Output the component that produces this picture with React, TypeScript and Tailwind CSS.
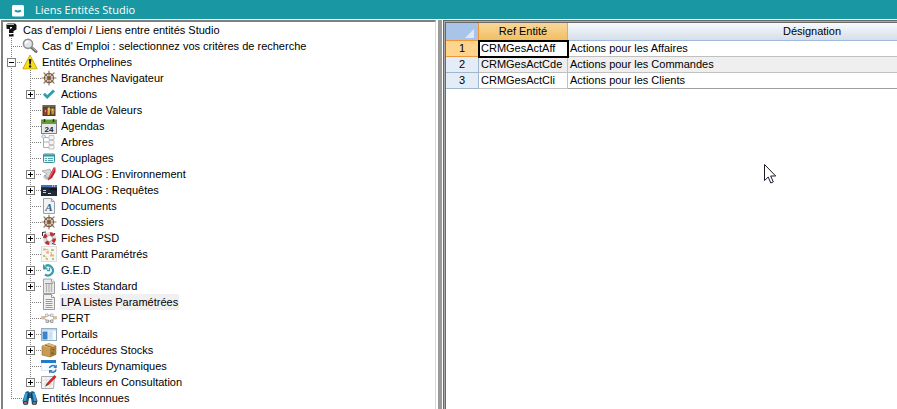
import { useState } from 'react';
import type { ReactNode } from 'react';

interface TreeItem {
  label: string;
  icon: ReactNode;
  expandable?: boolean;
  selected?: boolean;
}

interface EntityRow {
  ref: string;
  designation: string;
}

function Icon({ children }: { children: ReactNode }) {
  return (
    <svg viewBox="0 0 16 16" className="block size-4 shrink-0" aria-hidden="true">
      {children}
    </svg>
  );
}

const helpIcon = (
  <Icon>
    <path d="M3 3l1.500-1.500H12L13.500 3v4.500L10.500 9v2H6V7.500L9 6V5H7v2H4z" fill="#111" />
    <path d="M3.500 2.500h7.500" stroke="#b5b5b5" strokeWidth="1" />
    <path d="M3.500 3v3.500" stroke="#888" strokeWidth=".8" />
    <path d="M6 12h4.500v2.500H6z" fill="#111" />
    <path d="M6.500 12.500h2" stroke="#999" strokeWidth=".8" />
  </Icon>
);

const searchIcon = (
  <Icon>
    <path d="M9.500 9.500l4.500 4" stroke="#6a6a6a" strokeWidth="3" strokeLinecap="round" />
    <path d="M10 9.500l4 3.500" stroke="#b9b9b9" strokeWidth="1" strokeLinecap="round" />
    <circle cx="6" cy="5.800" r="4.600" fill="#dfe5e8" stroke="#8f8f8f" strokeWidth="1.500" />
    <path d="M3.500 6a2.800 2.800 0 0 1 3-2.500" stroke="#fff" strokeWidth="1.300" fill="none" />
  </Icon>
);

const warningIcon = (
  <Icon>
    <path d="M8 1L15.200 14.800H.8z" fill="#f6df18" stroke="#c9a800" strokeWidth=".9" strokeLinejoin="round" />
    <path d="M6.800 5h2.600L8.800 10.500H7.400z" fill="#151515" />
    <circle cx="8.100" cy="12.400" r="1.200" fill="#151515" />
  </Icon>
);

const wheelIcon = (
  <Icon>
    <path
      d="M8 1v14M1 8h14M3 3l10 10M13 3L3 13"
      stroke="#957658"
      strokeWidth="1.200"
      strokeLinecap="round"
    />
    <circle cx="8" cy="8" r="4.500" fill="none" stroke="#7d6045" strokeWidth="1.300" />
    <circle cx="8" cy="8" r="1.600" fill="#5d4128" />
    <circle cx="8" cy="8" r=".6" fill="#d9bb91" />
  </Icon>
);

const checkIcon = (
  <Icon>
    <path d="M3 7.800l3.200 3.200L13 4.500" stroke="#2a9fae" strokeWidth="2.800" fill="none" />
  </Icon>
);

const valuesIcon = (
  <Icon>
    <rect x="1.500" y="3" width="13" height="11" fill="#4b3e2e" />
    <path d="M2 4h12" stroke="#9a8b6c" />
    <path d="M3 7l2-1 1 3-1 4H3z" fill="#a13a26" />
    <path d="M6.500 6l2-1 1 2-1 6h-2z" fill="#e0b34b" />
    <path d="M10 7l2-1.500 1.500 2-.5 5h-2.500z" fill="#c78e2e" />
    <path d="M7 7h1M11 8h1M4 9h1" stroke="#fff1b5" />
  </Icon>
);

const agendaIcon = (
  <Icon>
    <rect x=".5" y="2" width="15" height="13.500" fill="#e8e8e8" stroke="#666" strokeWidth=".8" />
    <rect x="1" y="2" width="14" height="4" fill="#5f9e35" />
    <path d="M3.500 1v3M12.500 1v3" stroke="#333" strokeWidth="1.500" />
    <text x="8" y="13.500" textAnchor="middle" fontSize="8" fontWeight="700" fontFamily="Liberation Sans, sans-serif" fill="#222">
      24
    </text>
  </Icon>
);

const branchIcon = (
  <Icon>
    <path d="M2.500 3.500v10H8M2.500 8H8M2.500 3.500H8" stroke="#a9b0b5" fill="none" />
    <path d="M8 1.500h5v4H8zM8 6.500h5v4H8zM8 11.500h5v3.500H8z" fill="#f4f4f4" stroke="#c4c4c4" />
    <circle cx="2.500" cy="2.500" r="1.800" fill="#dceaf1" stroke="#9cb5c2" strokeWidth=".8" />
  </Icon>
);

const couplingIcon = (
  <Icon>
    <rect x="2.500" y="4" width="11" height="8.500" rx=".8" fill="#e6f3f4" stroke="#398f9a" />
    <path d="M2.500 4.500h11v2h-11z" fill="#2798a5" />
    <path d="M4 8.500h2M7 8.500h5M4 10.500h2M7 10.500h5" stroke="#56a5ad" />
  </Icon>
);

const dialogIcon = (
  <Icon>
    <path d="M1 5l8-2 2 6-3 4c-3 1-6-1-5-3l3-2z" fill="#d7d7d9" stroke="#a0a0a4" strokeWidth=".7" />
    <path d="M12.500 1.500h2V6L11 12l-4 2.500.5-3z" fill="#c5202d" />
    <path d="M13.500 2L8.500 11.500" stroke="#e9808a" strokeWidth=".9" />
    <path d="M3.500 9l4 4" stroke="#777" strokeWidth=".8" />
  </Icon>
);

const queryIcon = (
  <Icon>
    <rect y="3" width="16" height="11" fill="#10151f" />
    <rect y="3" width="16" height="2.500" fill="#4b70bc" />
    <path d="M0 5.500h7l3 3h6V14H0z" fill="#222a38" />
    <path d="M2 8.500h3M2 10.500h3M7 11.500h3" stroke="#e1e5ec" strokeWidth=".9" />
    <path d="M11 4h1M13 4h1" stroke="#fff" />
  </Icon>
);

const documentIcon = (
  <Icon>
    <path d="M2.500.5h8l3 3v12h-11z" fill="#f1f3f4" stroke="#9ba3a9" />
    <path d="M10.500.5v3h3" fill="#d5dadd" stroke="#9ba3a9" />
    <text x="8" y="12.500" textAnchor="middle" fontSize="11" fontStyle="italic" fontWeight="700" fontFamily="Liberation Serif, serif" fill="#3d5f82">
      A
    </text>
  </Icon>
);

const psdIcon = (
  <Icon>
    <ellipse cx="8.500" cy="8.500" rx="4.800" ry="4.800" fill="none" stroke="#dedede" strokeWidth="3.600" />
    <ellipse cx="8.500" cy="8.500" rx="4.800" ry="4.800" fill="none" stroke="#c12f35" strokeWidth="3.600" strokeDasharray="3.800 3.740" />
    <ellipse cx="8.500" cy="8.500" rx="3" ry="3" fill="#fff" stroke="#777" strokeWidth=".6" />
    <path d="M1 2.500l4-.5M1.500 2v4M11 13.500l3.500 1M14 3l-1.500 2" stroke="#333" />
  </Icon>
);

const ganttIcon = (
  <Icon>
    <rect x=".5" y=".5" width="15" height="15" fill="#f7f6f2" stroke="#dedede" />
    <path d="M2 3.500h3M5 6.500h3M9 9.500h4M5 13h2" stroke="#eab675" strokeWidth="2" />
    <path d="M10 4h3M2 10h2M11 13h2" stroke="#a4cf7b" strokeWidth="2" />
    <path d="M5 3.500h2v3M9 6.500h1.500v3M5 10v3" stroke="#c9a092" strokeWidth=".6" fill="none" />
  </Icon>
);

const gedIcon = (
  <Icon>
    <path d="M4.500 4A5 5 0 1 1 4 12.500" stroke="#3a9fac" strokeWidth="2.200" fill="none" />
    <path d="M2 2v5.500h5.500z" fill="#3a9fac" />
    <path d="M8.500 5.500v3.200H6" stroke="#3a9fac" strokeWidth="1.300" fill="none" />
  </Icon>
);

const listIcon = (
  <Icon>
    <path d="M2.500 1h8l3 3v11.500h-11z" fill="#e9e9e9" stroke="#a0a0a0" />
    <path d="M10.500 1v3h3" fill="#fff" stroke="#a0a0a0" />
    <path d="M4 5.500h8" stroke="#999" />
    <path d="M5.500 6v8M8 6v8M10.500 6v8" stroke="#b5b5b5" strokeWidth="1.300" />
  </Icon>
);

const linesIcon = (
  <Icon>
    <path d="M2.500.5h8l3 3v12h-11z" fill="#f2f2f2" stroke="#999" />
    <path d="M10.500.5v3h3" fill="#fff" stroke="#999" />
    <path d="M4.500 5.500h7M4.500 7.500h7M4.500 9.500h7M4.500 11.500h7M4.500 13.500h7" stroke="#999" />
  </Icon>
);

const pertIcon = (
  <Icon>
    <path d="M3 8l3-2.500h4.500l3 2.500-3 3H6z" fill="none" stroke="#aaa" />
    <path d="M.5 6.500h3.500v2.500H.5zM12.500 6.500h3v2.500h-3z" fill="#e6c096" stroke="#c3a88d" strokeWidth=".6" />
    <path d="M4.500 4h2.500v2.500H4.500zM9.500 4H12v2.500H9.500z" fill="#ececec" stroke="#aaa" strokeWidth=".7" />
    <path d="M5 10h2.500v2.500H5zM9.500 10H12v2.500H9.500z" fill="#ddd" stroke="#888" strokeWidth=".7" />
  </Icon>
);

const portalIcon = (
  <Icon>
    <rect x=".5" y="2.500" width="15" height="12" fill="#edf5fb" stroke="#91aec8" />
    <path d="M1 3h14v1.500H1z" fill="#b9d5ed" />
    <path d="M1.500 5.500h5v8h-5z" fill="#3d83c9" />
    <path d="M7.500 5.500h4v8h-4z" fill="#c8e1f4" />
    <path d="M12.500 5.500h2v8h-2z" fill="#fff" />
  </Icon>
);

const boxIcon = (
  <Icon>
    <path d="M1 4l7-2.500L15 4v8.500l-6 2.500-8-2z" fill="#c79b52" stroke="#93692e" strokeWidth=".6" />
    <path d="M1 4l8 2 6-2-7-2.500z" fill="#dfb96e" />
    <path d="M9 6l6-2v8.500L9 15z" fill="#a97c3a" />
    <path d="M4 3.200l7 2M11 8l2-.6M11 10v2l2-.5" stroke="#705029" strokeWidth=".8" fill="none" />
  </Icon>
);

const refreshIcon = (
  <Icon>
    <path d="M.5 2.500h14v10H.5z" fill="#fafcff" stroke="#dbe7f1" />
    <path d="M0 2h15v3H0z" fill="#247cc9" />
    <path d="M8.500 10a3.500 3 0 0 1 6-1.500M15 11.500a3.500 3 0 0 1-6 1.800" stroke="#2c82c8" strokeWidth="1.600" fill="none" />
    <path d="M15.800 6.500v3.500h-3.500zM8 15.500V12h3.500z" fill="#2c82c8" />
  </Icon>
);

const editIcon = (
  <Icon>
    <path d="M.5 2.500h13l-1 12H.5z" fill="#f5f5f5" stroke="#aaa" />
    <path d="M1 6h11M1 10h11M5 3v11M9 3v11" stroke="#dadada" strokeWidth=".8" />
    <path d="M13.500 1l2 2-8 8-2.500 1 1-3z" fill="#cf2a32" />
    <path d="M6 9.500L3.500 13l3.500-2.300z" fill="#444" />
  </Icon>
);

const binocularsIcon = (
  <Icon>
    <path d="M3.500 2L6 1l2 1.500L10 1l2.500 1 3 9-1.500 3.500h-4L9 8H7l-1 6.500H2L.5 11z" fill="#1a5f8a" />
    <path d="M4.500 3L2.700 11M11.500 3l1.800 8" stroke="#35a0da" strokeWidth="2.600" />
    <path d="M6.500 3.500L6 9M9.500 3.500L10 9" stroke="#173a52" strokeWidth="1.200" />
    <ellipse cx="3.500" cy="13" rx="2.300" ry="1.500" fill="#b0644e" stroke="#14384f" strokeWidth=".7" />
    <ellipse cx="12.500" cy="13" rx="2.300" ry="1.500" fill="#b0644e" stroke="#14384f" strokeWidth=".7" />
  </Icon>
);

const orphans: TreeItem[] = [
  { label: 'Branches Navigateur', icon: wheelIcon },
  { label: 'Actions', icon: checkIcon, expandable: true },
  { label: 'Table de Valeurs', icon: valuesIcon },
  { label: 'Agendas', icon: agendaIcon },
  { label: 'Arbres', icon: branchIcon },
  { label: 'Couplages', icon: couplingIcon },
  { label: 'DIALOG : Environnement', icon: dialogIcon, expandable: true },
  { label: 'DIALOG : Requêtes', icon: queryIcon, expandable: true },
  { label: 'Documents', icon: documentIcon },
  { label: 'Dossiers', icon: wheelIcon },
  { label: 'Fiches PSD', icon: psdIcon, expandable: true },
  { label: 'Gantt Paramétrés', icon: ganttIcon },
  { label: 'G.E.D', icon: gedIcon, expandable: true },
  { label: 'Listes Standard', icon: listIcon, expandable: true },
  { label: 'LPA Listes Paramétrées', icon: linesIcon, selected: true },
  { label: 'PERT', icon: pertIcon },
  { label: 'Portails', icon: portalIcon, expandable: true },
  { label: 'Procédures Stocks', icon: boxIcon, expandable: true },
  { label: 'Tableurs Dynamiques', icon: refreshIcon },
  { label: 'Tableurs en Consultation', icon: editIcon, expandable: true },
];

const rows: EntityRow[] = [
  { ref: 'CRMGesActAff', designation: 'Actions pour les Affaires' },
  { ref: 'CRMGesActCde', designation: 'Actions pour les Commandes' },
  { ref: 'CRMGesActCli', designation: 'Actions pour les Clients' },
];

interface GuideProps {
  branch?: boolean;
  last?: boolean;
  children?: ReactNode;
}

function Guide({ branch, last, children }: GuideProps) {
  return (
    <span className="relative block h-4 w-[19px] shrink-0">
      <span
        className={`absolute left-2 top-0 w-px bg-[repeating-linear-gradient(to_bottom,#808080_0_1px,transparent_1px_2px)] ${
          last ? 'h-2' : 'h-4'
        }`}
      />
      {branch && (
        <span className="absolute left-2 top-2 h-px w-[11px] bg-[repeating-linear-gradient(to_right,#808080_0_1px,transparent_1px_2px)]" />
      )}
      {children}
    </span>
  );
}

interface ToggleProps {
  label: string;
  open?: boolean;
  onClick?: () => void;
}

function Toggle({ label, open = false, onClick }: ToggleProps) {
  return (
    <button
      type="button"
      aria-label={label}
      aria-expanded={open}
      onClick={onClick}
      className="absolute left-1 top-1 size-[9px] border border-[#808080] bg-white"
    >
      <span className="absolute left-px top-[3px] h-px w-[5px] bg-black" />
      {!open && <span className="absolute left-[3px] top-px h-[5px] w-px bg-black" />}
    </button>
  );
}

function Label({ text, selected }: { text: string; selected?: boolean }) {
  return (
    <span className={`ml-[3px] px-px ${selected ? 'bg-[#f0f0f0]' : ''}`}>{text}</span>
  );
}

function EntityTree() {
  const [open, setOpen] = useState(true);

  return (
    <ul className="text-[11px] leading-4 whitespace-nowrap text-black">
      <li className="flex">
        {helpIcon}
        <Label text="Cas d'emploi / Liens entre entités Studio" />
      </li>
      <li className="flex">
        <Guide branch />
        {searchIcon}
        <Label text="Cas d' Emploi : selectionnez vos critères de recherche" />
      </li>
      <li>
        <div className="flex">
          <Guide branch>
            <Toggle label="Entités Orphelines" open={open} onClick={() => setOpen(!open)} />
          </Guide>
          {warningIcon}
          <Label text="Entités Orphelines" />
        </div>
        {open && (
          <ul>
            {orphans.map((item, i) => (
              <li key={item.label} className="flex">
                <Guide />
                <Guide branch last={i === orphans.length - 1}>
                  {item.expandable && <Toggle label={item.label} />}
                </Guide>
                {item.icon}
                <Label text={item.label} selected={item.selected} />
              </li>
            ))}
          </ul>
        )}
      </li>
      <li className="flex">
        <Guide branch last />
        {binocularsIcon}
        <Label text="Entités Inconnues" />
      </li>
    </ul>
  );
}

function EntityTable() {
  return (
    <table className="w-[610px] table-fixed border-separate border-spacing-0 text-[11px] leading-[15px] text-black">
      <colgroup>
        <col className="w-[33px]" />
        <col className="w-[89px]" />
        <col />
      </colgroup>
      <thead>
        <tr className="h-[18px]">
          <td className="border-r border-b border-[#f29536] bg-[#a9c4e9] p-0">
            <svg viewBox="0 0 9 9" className="mt-1 mr-1 ml-auto block size-[9px]" aria-hidden="true">
              <path d="M9 0v9H0z" fill="#dfe9f6" />
            </svg>
          </td>
          <th className="border-r border-b border-r-[#9eb6ce] border-b-[#f29536] bg-linear-to-b from-[#f8d79b] to-[#f2bf61] p-0 font-normal">
            Ref Entité
          </th>
          <th className="border-b border-[#9ebbdd] bg-linear-to-b from-[#f8fafc] to-[#d5deea] p-0 font-normal">
            Désignation
          </th>
        </tr>
      </thead>
      <tbody>
        {rows.map((row, i) => (
          <tr key={row.ref} className="h-4">
            <th
              className={`border-r border-b p-0 font-normal ${
                i === 0 ? 'border-[#f29536] bg-[#ffd58d]' : 'border-[#9eb6ce] bg-[#e4ecf7]'
              }`}
            >
              {i + 1}
            </th>
            <td
              className={`border-r border-b border-[#c0c0c0] py-0 pr-0 pl-0.5 ${
                i === 0 ? 'outline-2 -outline-offset-1 outline-black' : ''
              } ${i === 1 ? 'bg-[#efefef]' : 'bg-white'}`}
            >
              {row.ref}
            </td>
            <td
              className={`border-b py-0 pr-0 pl-0.5 ${i === 1 ? 'bg-[#efefef]' : 'bg-white'} ${
                i === rows.length - 1 ? 'border-[#a0a0a0]' : 'border-[#c0c0c0]'
              }`}
            >
              {row.designation}
            </td>
          </tr>
        ))}
      </tbody>
    </table>
  );
}

export default function App() {
  return (
    <div className="flex h-screen flex-col overflow-hidden bg-white font-['Liberation_Sans',Arial,sans-serif]">
      <header className="flex h-[19px] shrink-0 items-center bg-[#1998a3] pl-3 text-white">
        <svg viewBox="0 0 12 12" className="mt-[3px] size-3" aria-hidden="true">
          <rect width="12" height="11.500" rx="1.500" fill="#fff" />
          <path d="M3 5.500q3 2 6 0" stroke="#1998a3" strokeWidth="2" fill="none" />
        </svg>
        <h1 className="ml-[11px] font-['Open_Sans',sans-serif] text-[11px] leading-4 font-medium">
          Liens Entités Studio
        </h1>
      </header>
      <main className="flex min-h-0 flex-1 pt-px">
        <section className="ml-px w-[435px] shrink-0 overflow-hidden border-t-2 border-r border-l-2 border-t-[#808080] border-r-[#d8d8d8] border-l-[#808080]">
          <EntityTree />
        </section>
        <div className="mr-px ml-0.5 w-1 shrink-0 bg-[#9a9a9a]" />
        <section className="flex min-w-0 flex-1 border-t-3 border-l-3 border-double border-[#696969] bg-[#a9a9a9]">
          <div className="relative min-w-0 flex-1 overflow-hidden bg-white">
            <EntityTable />
            <svg viewBox="0 0 13 20" className="absolute top-[141px] left-[318px] h-5 w-[13px]" aria-hidden="true">
              <path
                d="M.5.500v16l3.700-3.500 2.600 6 2.500-1.100L6.700 12h5z"
                fill="#fff"
                stroke="#1a1a2b"
                strokeLinejoin="round"
              />
            </svg>
          </div>
        </section>
      </main>
    </div>
  );
}
